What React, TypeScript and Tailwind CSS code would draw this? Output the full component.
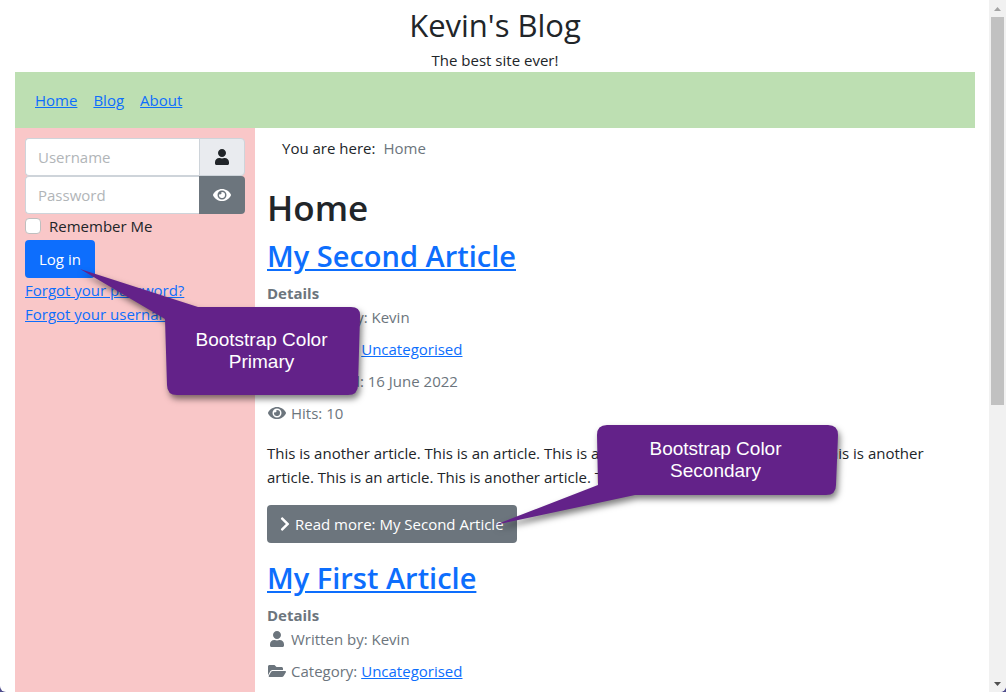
import type { ReactNode } from 'react';
import { FaChevronRight, FaCalendarAlt, FaEye, FaFolderOpen, FaUser } from 'react-icons/fa';
import clsx from 'clsx';

const navItems = ['Home', 'Blog', 'About'];

function TextLink({ children }: { children: ReactNode }) {
  return (
    <a href="#" className="text-[#0d6efd] underline">
      {children}
    </a>
  );
}

function Callout({ className, shape, textClass, title, name }: {
  className: string;
  shape: string;
  textClass: string;
  title: string;
  name: string;
}) {
  return (
    <div className={clsx('absolute z-20 pointer-events-none', className)}>
      <svg className="absolute inset-0 w-full h-full overflow-visible drop-shadow-[2px_4px_3px_rgba(0,0,0,0.5)]" aria-hidden="true">
        <path d={shape} fill="#632289" />
      </svg>
      <p className={clsx("absolute text-center text-white text-[19px] leading-[22px] font-['Liberation_Sans',Arial,sans-serif]", textClass)}>
        {title}
        <br />
        {name}
      </p>
    </div>
  );
}

function LoginForm() {
  return (
    <form className="text-[#212529]">
      <div className="flex h-[38px]">
        <input
          type="text"
          aria-label="Username"
          placeholder="Username"
          className="min-w-0 flex-1 rounded-l border border-r-0 border-[#ced4da] bg-white px-3 placeholder:text-[#b1b5b8]"
        />
        <span className="flex w-[46px] items-center justify-center rounded-r border border-[#ced4da] bg-[#e9ebef]">
          <FaUser className="text-base" />
        </span>
      </div>
      <div className="flex h-[38px]">
        <input
          type="password"
          aria-label="Password"
          placeholder="Password"
          className="min-w-0 flex-1 rounded-l border border-r-0 border-[#ced4da] bg-white px-3 placeholder:text-[#b1b5b8]"
        />
        <button type="button" aria-label="Show Password" className="flex w-[46px] items-center justify-center rounded-r bg-[#6c757d] text-white">
          <FaEye className="text-lg" />
        </button>
      </div>
      <div className="mb-0.5 flex items-center gap-2">
        <input
          id="remember"
          type="checkbox"
          className="size-4 appearance-none rounded border border-[#bfbfbf] bg-white checked:bg-[#0d6efd]"
        />
        <label htmlFor="remember">Remember Me</label>
      </div>
      <div className="relative w-fit">
        <button type="submit" className="h-[38px] rounded bg-[#0d6efd] px-3.5 text-white">
          Log in
        </button>
        <Callout
          className="left-[55px] top-[29px] h-[126px] w-[280px]"
          shape="M0 0 L118 38 H271 Q281 38 280 48 L278 116 Q278 126 268 126 H97 Q87 126 87 116 L85 50 Z"
          textClass="left-[83px] right-0 top-[60px]"
          title="Bootstrap Color"
          name="Primary"
        />
      </div>
      <ul>
        <li><TextLink>Forgot your password?</TextLink></li>
        <li><TextLink>Forgot your username?</TextLink></li>
      </ul>
    </form>
  );
}

function Detail({ icon, children }: { icon: ReactNode; children: ReactNode }) {
  return (
    <dd className="mb-2 flex items-center gap-[5px]">
      <span className="flex w-[19px] justify-center">{icon}</span>
      <span>{children}</span>
    </dd>
  );
}

function Article({ title, published, hits, children }: {
  title: string;
  published?: string;
  hits?: number;
  children?: ReactNode;
}) {
  return (
    <article className="mb-[17px]">
      <h2 className="mb-[7px] text-[29px] leading-9 font-semibold">
        <TextLink>{title}</TextLink>
      </h2>
      <dl className="text-[#6c757d]">
        <dt className="font-bold">Details</dt>
        <Detail icon={<FaUser className="text-base" />}>Written by: Kevin</Detail>
        <Detail icon={<FaFolderOpen className="text-lg" />}>
          Category: <TextLink>Uncategorised</TextLink>
        </Detail>
        {published && <Detail icon={<FaCalendarAlt />}>Published: {published}</Detail>}
        {hits && <Detail icon={<FaEye className="text-lg" />}>Hits: {hits}</Detail>}
      </dl>
      {children}
    </article>
  );
}

function Scrollbar() {
  return (
    <div className="flex w-[17px] shrink-0 flex-col items-center bg-[#f1f1f1]">
      <div className="flex h-[17px] items-center">
        <svg width="7" height="4" viewBox="0 0 7 4"><path d="M0 4 L3.5 0 L7 4 Z" fill="#a3a3a3" /></svg>
      </div>
      <div className="h-[388px] w-[13px] bg-[#c1c1c1]" />
      <div className="mt-auto flex h-[17px] items-center">
        <svg width="7" height="4" viewBox="0 0 7 4"><path d="M0 0 L3.5 4 L7 0 Z" fill="#505050" /></svg>
      </div>
    </div>
  );
}

export default function App() {
  return (
    <div className="h-screen bg-[#4f4d8c]">
      <div className="flex h-full overflow-hidden rounded-b-md bg-white font-['Open_Sans','Noto_Sans',sans-serif] text-[15px] leading-6 text-[#212529]">
        <div className="flex min-w-0 flex-1 flex-col overflow-hidden pl-[15px] pr-3.5">
          <header className="text-center">
            <h1 className="pt-0.5 text-[31px] leading-[46px]">Kevin's Blog</h1>
            <p>The best site ever!</p>
          </header>
          <nav className="flex gap-4 bg-[#bddfb2] px-5 py-4">
            {navItems.map((item) => (
              <TextLink key={item}>{item}</TextLink>
            ))}
          </nav>
          <div className="flex flex-1">
            <aside className="w-1/4 bg-[#f9c7c8] p-2.5">
              <LoginForm />
            </aside>
            <main className="w-3/4 px-3 pt-2">
              <div className="flex gap-2 px-[15px]">
                <span>You are here:</span>
                <span className="text-[#6c757d]">Home</span>
              </div>
              <h1 className="mt-6 mb-1.5 text-[35px] leading-[48px] font-semibold">Home</h1>
              <Article title="My Second Article" published="16 June 2022" hits={10}>
                <p className="my-4">
                  This is another article. This is an article. This is another article. This is an article. This is another
                  article. This is an article. This is another article. This is an article.
                </p>
                <div className="relative w-fit">
                  <a href="#" className="flex h-[38px] items-center gap-[5px] rounded bg-[#6c757d] px-[13px] text-white">
                    <FaChevronRight viewBox="0 0 320 512" className="h-4 w-2.5" />
                    <span>Read more: My Second Article</span>
                  </a>
                  <Callout
                    className="left-[228px] -top-20 h-[100px] w-[343px]"
                    shape="M0 100 L103 60 L102 10 Q102 0 112 0 H333 Q343 0 343 10 L341 60 Q341 70 331 70 H140 Z"
                    textClass="left-[98px] right-0 top-[13px]"
                    title="Bootstrap Color"
                    name="Secondary"
                  />
                </div>
              </Article>
              <Article title="My First Article" />
            </main>
          </div>
        </div>
        <Scrollbar />
      </div>
    </div>
  );
}
